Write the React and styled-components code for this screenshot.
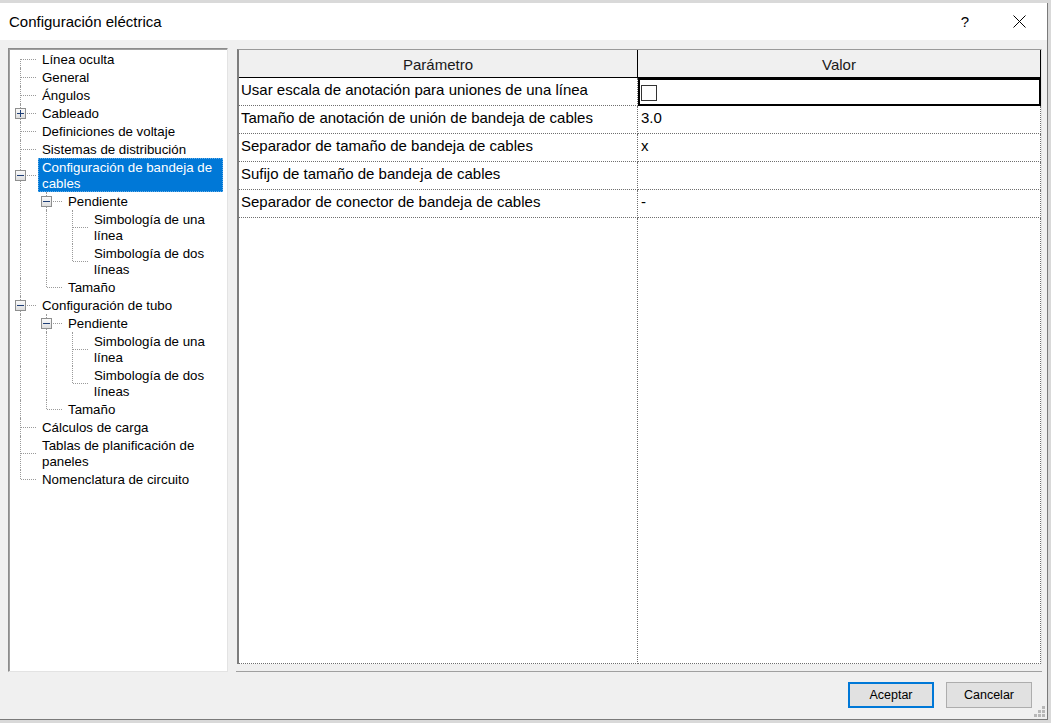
import React from 'react';
import styled, { createGlobalStyle } from 'styled-components';

const GlobalStyle = createGlobalStyle`
  html, body {
    margin: 0;
    padding: 0;
    background: #d6d6d6;
    font-family: "Liberation Sans", Arial, sans-serif;
  }
`;

const Screen = styled.div`
  width: 1051px;
  height: 723px;
  overflow: hidden;
  background: #d9d9d9;
  padding-top: 3px;
  box-sizing: border-box;
`;

const Dialog = styled.div`
  position: relative;
  width: 1048px;
  height: 717px;
  box-sizing: border-box;
  display: flex;
  flex-direction: column;
  background: #f0f0f0;
  border-right: 1px solid #7a7a7a;
  border-bottom: 1px solid #7a7a7a;
`;

const TitleBar = styled.div`
  height: 37px;
  flex: none;
  display: flex;
  align-items: center;
  background: #fff;
  padding: 0 5px 0 9px;
`;

const Title = styled.div`
  flex: 1;
  font-size: 15px;
  color: #000;
`;

const CaptionButton = styled.div`
  width: 46px;
  height: 37px;
  display: flex;
  align-items: center;
  justify-content: center;
  font-size: 15px;
  color: #000;
  margin-right: ${(p) => p.$gap || 0}px;
`;

const Body = styled.div`
  flex: 1;
  display: flex;
  flex-direction: column;
  padding: 8px 5px 0 8px;
`;

const Main = styled.div`
  height: 624px;
  flex: none;
  display: flex;
  gap: 8px;
`;

const TreeBox = styled.div`
  width: 220px;
  height: 624px;
  box-sizing: border-box;
  background: #fff;
  border: 1px solid;
  border-color: #8c8c8c #e3e3e3 #e3e3e3 #8c8c8c;
  box-shadow: inset 1px 1px 0 #a0a0a0;
  padding: 1px 0 0 1px;
  overflow: hidden;
`;

const TreeRow = styled.div`
  display: flex;
  align-items: stretch;
`;

const Gutter = styled.div`
  position: relative;
  flex: none;
  width: 26px;
`;

const VLine = styled.span`
  position: absolute;
  left: 10px;
  top: ${(p) => (p.$up ? '0' : '50%')};
  bottom: ${(p) => (p.$down ? '0' : '50%')};
  border-left: 1px dotted #9a9a9a;
`;

const HLine = styled.span`
  position: absolute;
  left: 11px;
  right: 0;
  top: 50%;
  border-top: 1px dotted #9a9a9a;
`;

const Expander = styled.span`
  position: absolute;
  left: 5px;
  top: calc(50% - 5px);
  width: 11px;
  height: 11px;
  box-sizing: border-box;
  border: 1px solid #8e8f8f;
  background: linear-gradient(#fafafa, #dedede);
  display: flex;
  align-items: center;
  justify-content: center;
`;

const Label = styled.div`
  flex: 1;
  margin: 0 4px 0 2px;
  padding: 2px 4px 0;
  font-size: 13.3px;
  line-height: 16px;
  color: ${(p) => (p.$selected ? '#fff' : '#000')};
  background: ${(p) => (p.$selected ? '#0078d7' : 'transparent')};
  outline: ${(p) => (p.$selected ? '1px dotted #66aee8' : 'none')};
  outline-offset: -1px;
  white-space: nowrap;
`;

const RightPane = styled.div`
  width: 806px;
  display: flex;
  flex-direction: column;
`;

const Grid = styled.div`
  margin: 1px 0 0 1px;
  height: 615px;
  box-sizing: border-box;
  display: flex;
  flex-direction: column;
  background: #fff;
  border-left: 2px solid #7d7d7d;
  border-top: 1px solid #9a9a9a;
  border-right: 1px solid #e3e3e3;
`;

const Columns = styled.div`
  display: grid;
  grid-template-columns: 399px 403px;
  flex: ${(p) => (p.$fill ? 1 : 'none')};
  height: ${(p) => (p.$fill ? 'auto' : '28px')};
`;

const HeadCell = styled.div`
  background: #f0f0f0;
  border-right: 1px solid #000;
  border-bottom: 1px solid #000;
  display: flex;
  align-items: center;
  justify-content: center;
  padding-top: 2px;
  font-size: 15px;
  color: #1a1a1a;
`;

const Cell = styled.div`
  box-sizing: border-box;
  border-right: 1px dotted #6f6f6f;
  border-bottom: 1px dotted #6f6f6f;
  padding: 2px 0 0 ${(p) => (p.$value ? 3 : 2)}px;
  font-size: 15px;
  line-height: 20px;
  color: #000;
  white-space: nowrap;
  ${(p) =>
    p.$active &&
    `
    border: 2px solid #000;
    padding: 3px 0 0 1px;
  `}
`;

const CheckBox = styled.div`
  width: 16px;
  height: 16px;
  margin-top: 2px;
  box-sizing: border-box;
  border: 1px solid #333;
  background: #fff;
`;

const Separator = styled.div`
  margin-top: 7px;
  height: 1px;
  background: #a0a0a0;
`;

const Footer = styled.div`
  display: flex;
  justify-content: flex-end;
  gap: 12px;
  padding: 10px 10px 0 0;
`;

const Button = styled.button`
  width: 86px;
  height: 26px;
  box-sizing: border-box;
  background: #e1e1e1;
  border: ${(p) => (p.$default ? '2px solid #0078d7' : '1px solid #adadad')};
  font-family: "Liberation Sans", Arial, sans-serif;
  font-size: 12.5px;
  color: #000;
  padding: 0;
`;

const Grip = styled.svg`
  position: absolute;
  right: 2px;
  bottom: 2px;
`;

const tubeChildren = [
  {
    label: 'Pendiente',
    children: [
      { label: ['Simbología de una', 'línea'] },
      { label: ['Simbología de dos', 'líneas'] },
    ],
  },
  { label: 'Tamaño' },
];

const tree = [
  { label: 'Línea oculta' },
  { label: 'General' },
  { label: 'Ángulos' },
  { label: 'Cableado', collapsed: true },
  { label: 'Definiciones de voltaje' },
  { label: 'Sistemas de distribución' },
  { label: ['Configuración de bandeja de', 'cables'], selected: true, children: tubeChildren },
  { label: 'Configuración de tubo', children: tubeChildren },
  { label: 'Cálculos de carga' },
  { label: ['Tablas de planificación de', 'paneles'] },
  { label: 'Nomenclatura de circuito' },
];

const flatten = (items, depth = 0, guides = [], out = []) => {
  items.forEach((item, i) => {
    const hasNext = i < items.length - 1;
    out.push({ ...item, depth, guides, hasNext, first: depth === 0 && i === 0 });
    if (item.children) flatten(item.children, depth + 1, [...guides, hasNext], out);
  });
  return out;
};

const rows = [
  ['Usar escala de anotación para uniones de una línea', 'check'],
  ['Tamaño de anotación de unión de bandeja de cables', '3.0'],
  ['Separador de tamaño de bandeja de cables', 'x'],
  ['Sufijo de tamaño de bandeja de cables', ''],
  ['Separador de conector de bandeja de cables', '-'],
];

const Glyph = ({ plus }) => (
  <svg width="9" height="9" viewBox="0 0 9 9">
    <rect x="1" y="4" width="7" height="1" fill="#1f3f77" />
    {plus && <rect x="4" y="1" width="1" height="7" fill="#1f3f77" />}
  </svg>
);

const TreeItem = ({ node }) => {
  const expandable = node.collapsed || node.children;
  return (
    <TreeRow>
      {node.guides.map((g, i) => (
        <Gutter key={i}>{g && <VLine $up $down />}</Gutter>
      ))}
      <Gutter>
        <VLine $up={!node.first} $down={node.hasNext} />
        <HLine />
        {expandable && (
          <Expander>
            <Glyph plus={node.collapsed} />
          </Expander>
        )}
      </Gutter>
      <Label $selected={node.selected}>
        {[].concat(node.label).map((line) => (
          <div key={line}>{line}</div>
        ))}
      </Label>
    </TreeRow>
  );
};

export default function App() {
  const nodes = flatten(tree);
  return (
    <>
      <GlobalStyle />
      <Screen>
        <Dialog>
          <TitleBar>
            <Title>Configuración eléctrica</Title>
            <CaptionButton $gap={8}>?</CaptionButton>
            <CaptionButton>
              <svg width="13" height="13" viewBox="0 0 13 13">
                <path d="M0.5 0.5 L12.5 12.5 M12.5 0.5 L0.5 12.5" stroke="#000" strokeWidth="1" />
              </svg>
            </CaptionButton>
          </TitleBar>
          <Body>
            <Main>
              <TreeBox>
                {nodes.map((n, i) => (
                  <TreeItem key={i} node={n} />
                ))}
              </TreeBox>
              <RightPane>
                <Grid>
                  <Columns>
                    <HeadCell>Parámetro</HeadCell>
                    <HeadCell>Valor</HeadCell>
                  </Columns>
                  {rows.map(([param, value], i) => (
                    <Columns key={param}>
                      <Cell>{param}</Cell>
                      <Cell $value $active={i === 0}>
                        {value === 'check' ? <CheckBox /> : value}
                      </Cell>
                    </Columns>
                  ))}
                  <Columns $fill>
                    <Cell />
                    <Cell />
                  </Columns>
                </Grid>
                <Separator />
              </RightPane>
            </Main>
            <Footer>
              <Button $default>Aceptar</Button>
              <Button>Cancelar</Button>
            </Footer>
          </Body>
          <Grip width="11" height="11" viewBox="0 0 11 11">
            {[
              [8, 0],
              [4, 4],
              [8, 4],
              [0, 8],
              [4, 8],
              [8, 8],
            ].map(([x, y]) => (
              <rect key={`${x}-${y}`} x={x} y={y} width="3" height="3" fill="#b8b8b8" />
            ))}
          </Grip>
        </Dialog>
      </Screen>
    </>
  );
}
